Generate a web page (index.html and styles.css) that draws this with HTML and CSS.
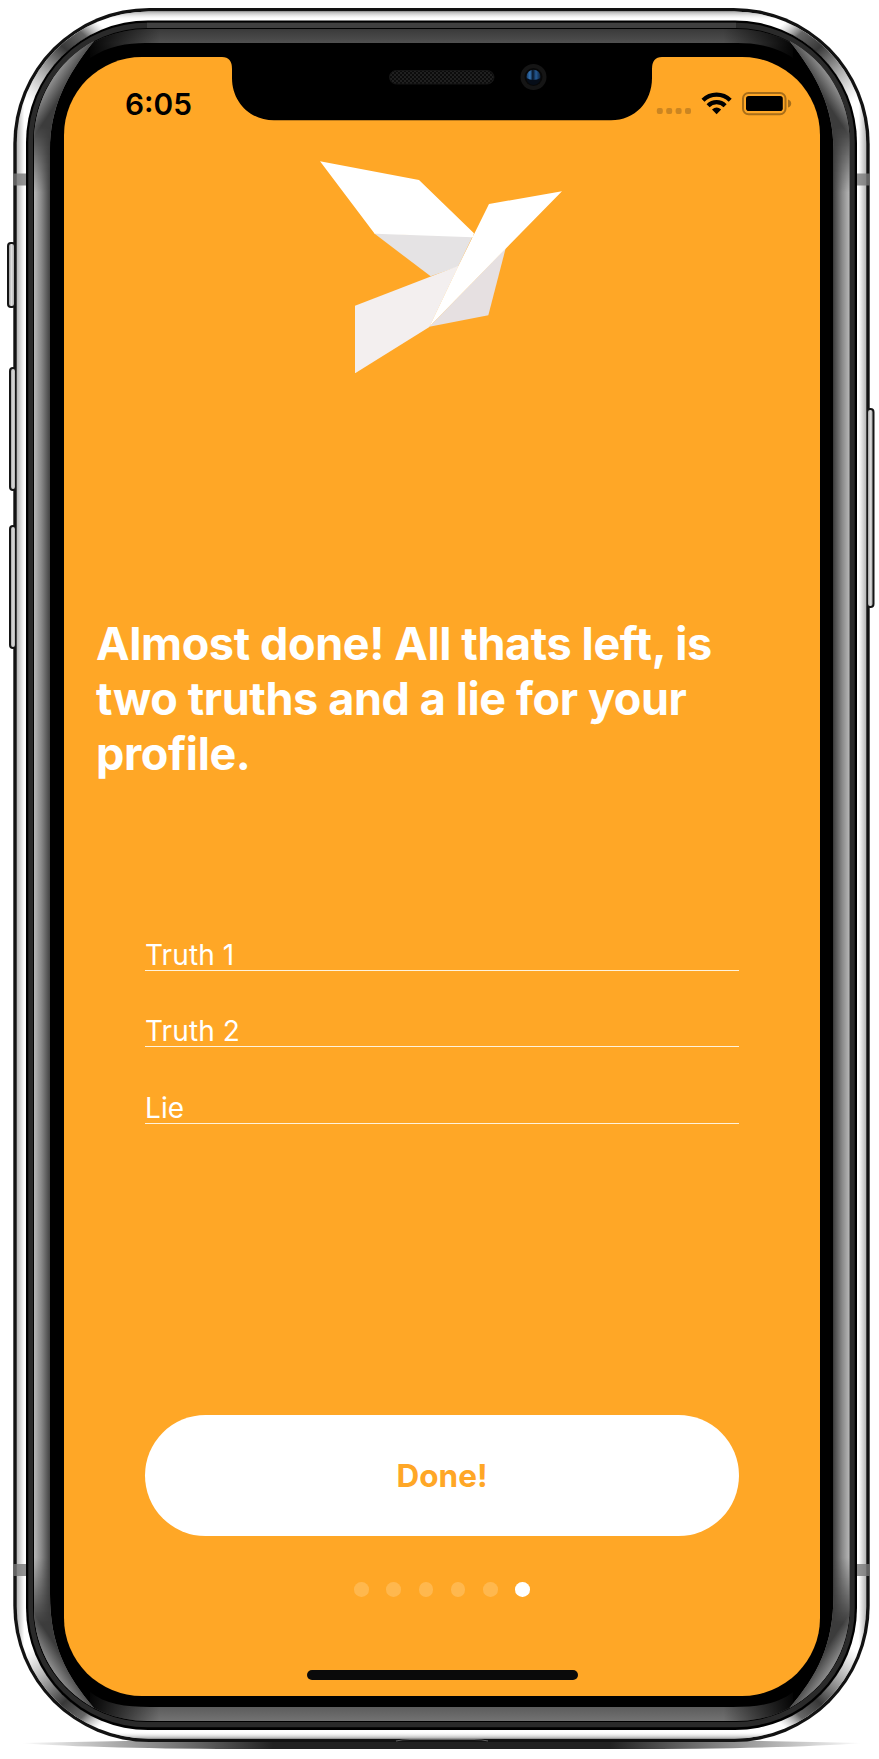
FILE: index.html
```
<!DOCTYPE html>
<html lang="en">
<head>
<meta charset="utf-8">
<title>Profile setup</title>
<link rel="stylesheet" href="styles.css">
</head>
<body>
<div class="device">
  <svg class="frame" viewBox="0 0 879 1759" aria-hidden="true">
    <defs>
      <linearGradient id="steel" x1="0" x2="1"><stop offset="0" stop-color="#b4b4b4"/><stop offset=".009" stop-color="#fff"/><stop offset=".991" stop-color="#fff"/><stop offset="1" stop-color="#b4b4b4"/></linearGradient>
      <linearGradient id="steelV" x1="0" x2="0" y1="0" y2="1"><stop offset="0" stop-color="#aaa"/><stop offset=".005" stop-color="#fff" stop-opacity="0"/><stop offset=".996" stop-color="#fff" stop-opacity="0"/><stop offset="1" stop-color="#aaa"/></linearGradient>
      <linearGradient id="side" gradientUnits="userSpaceOnUse" x1="34" x2="50" y1="0" y2="0"><stop offset="0" stop-color="#b8b8b8"/><stop offset=".45" stop-color="#8a8a8a"/><stop offset="1" stop-color="#424242"/></linearGradient>
      <linearGradient id="tipTop" gradientUnits="userSpaceOnUse" x1="46" y1="80" x2="64" y2="92"><stop offset="0" stop-color="#a8a8a8"/><stop offset="1" stop-color="#3c3c3c"/></linearGradient>
      <linearGradient id="tipBottom" gradientUnits="userSpaceOnUse" x1="46" y1="1670" x2="64" y2="1658"><stop offset="0" stop-color="#a8a8a8"/><stop offset="1" stop-color="#3c3c3c"/></linearGradient>
      <linearGradient id="blend" x1="0" x2="0" y1="0" y2="1"><stop offset="0" stop-color="#fff" stop-opacity="0"/><stop offset=".045" stop-color="#fff"/><stop offset=".955" stop-color="#fff"/><stop offset="1" stop-color="#fff" stop-opacity="0"/></linearGradient>
      <mask id="straight"><rect x="30" y="125" width="30" height="1500" fill="url(#blend)"/></mask>
      <linearGradient id="fade" x1="0" x2="1"><stop offset="0" stop-color="#000" stop-opacity=".95"/><stop offset=".1" stop-color="#000" stop-opacity="0"/><stop offset=".9" stop-color="#000" stop-opacity="0"/><stop offset="1" stop-color="#000" stop-opacity=".95"/></linearGradient>
      <linearGradient id="top" x1="0" x2="0" y1="0" y2="1"><stop offset="0" stop-color="#383838"/><stop offset=".5" stop-color="#505050"/><stop offset="1" stop-color="#3c3c3c"/></linearGradient>
      <linearGradient id="bottom" x1="0" x2="0" y1="0" y2="1"><stop offset="0" stop-color="#444"/><stop offset="1" stop-color="#747474"/></linearGradient>
      <linearGradient id="shade" x1="0" x2="1"><stop offset="0" stop-color="#222" stop-opacity="0"/><stop offset=".3" stop-color="#222"/><stop offset=".7" stop-color="#222"/><stop offset="1" stop-color="#222" stop-opacity="0"/></linearGradient>
      <linearGradient id="key" x1="0" x2="1"><stop offset="0" stop-color="#888"/><stop offset=".5" stop-color="#dedede"/><stop offset="1" stop-color="#999"/></linearGradient>
      <linearGradient id="glint" gradientUnits="userSpaceOnUse" x1="28" y1="100" x2="98" y2="22"><stop offset="0" stop-color="#aaa" stop-opacity="0"/><stop offset=".4" stop-color="#888"/><stop offset=".6" stop-color="#383838"/><stop offset=".82" stop-color="#666"/><stop offset="1" stop-color="#aaa" stop-opacity="0"/></linearGradient>
      <linearGradient id="lens" x1="0" x2="1"><stop offset="0" stop-color="#173a63"/><stop offset=".25" stop-color="#3474b5"/><stop offset=".45" stop-color="#081425"/><stop offset=".68" stop-color="#245a96"/><stop offset="1" stop-color="#0d2038"/></linearGradient>
      <pattern id="mesh" width="4" height="4" patternUnits="userSpaceOnUse"><rect width="4" height="4" fill="#0c0c0c"/><rect width="2" height="2" fill="#202020"/><rect x="2" y="2" width="2" height="2" fill="#202020"/></pattern>
      <clipPath id="glass"><rect x="34" y="29" width="815.500" height="1692" rx="113"/></clipPath>
      <g id="sideBevel">
        <path d="M94 41A114 114 0 0 0 34 142V1608A114 114 0 0 0 94 1708C66 1675 50 1645 50 1594V150C50 108 66 76 94 41Z" fill="#777"/>
        <path d="M94 41A114 114 0 0 0 34 142V200H50V150C50 108 66 76 94 41Z" fill="url(#tipTop)"/>
        <path d="M94 1708A114 114 0 0 1 34 1608V1550H50V1594C50 1645 66 1675 94 1708Z" fill="url(#tipBottom)"/>
        <rect x="34" y="125" width="16" height="1500" fill="url(#side)" mask="url(#straight)"/>
      </g>
    </defs>
    <path d="M20 1743Q440 1733 863 1743Q780 1749 620 1749H260Q100 1749 20 1743Z" fill="url(#shade)"/>
    <rect x="13.3" y="8" width="856.4" height="1734" rx="136" fill="#121212"/>
    <g fill="url(#key)" stroke="#151515" stroke-width="2">
      <rect x="8" y="243" width="7" height="64" rx="3"/>
      <rect x="10" y="368" width="6" height="122" rx="3"/>
      <rect x="10" y="526" width="6" height="122" rx="3"/>
      <rect x="867" y="409" width="6.500" height="198" rx="3"/>
    </g>
    <rect x="16.7" y="11.5" width="849.6" height="1727" rx="132" fill="url(#steel)"/>
    <rect x="16.7" y="11.5" width="849.6" height="1727" rx="132" fill="url(#steelV)"/>
    <g fill="none" stroke="url(#glint)" stroke-width="9">
      <path id="corner" d="M21.5 143A127 127 0 0 1 148 16"/>
      <use href="#corner" transform="translate(883) scale(-1 1)"/>
      <use href="#corner" transform="translate(0 1750) scale(1 -1)"/>
      <use href="#corner" transform="translate(883 1750) scale(-1 -1)"/>
    </g>
    <path d="M13.3 173.5H27V185.5H13.3ZM856 173.5H869.7V185.5H856ZM13.3 1564H27V1576H13.3ZM856 1564H869.7V1576H856Z" fill="#777" fill-opacity=".8"/>
    <rect x="26" y="20.5" width="831" height="1709.5" rx="122" fill="#000"/>
    <rect x="28.3" y="22.8" width="826.4" height="1704.4" rx="119" fill="#2a2a2a"/>
    <path d="M147 22.8H736V28H147Z" fill="#404040"/>
    <rect x="33" y="28" width="817" height="1694" rx="114" fill="#000"/>
    <g clip-path="url(#glass)">
      <path d="M90 28H793V58C775 46 755 43 738 43H145C128 43 108 46 90 58Z" fill="url(#top)"/>
      <path d="M90 1692C105 1704 125 1707 150 1707H733C758 1707 778 1704 793 1692V1722H90Z" fill="url(#bottom)"/>
      <path d="M89 28H794V59H89ZM89 1690H794V1722H89Z" fill="url(#fade)"/>
    </g>
    <use href="#sideBevel"/>
    <use href="#sideBevel" transform="translate(883.5) scale(-1 1)"/>
    <path d="M396 1741Q402 1739.5 410 1739.5H474Q482 1739.5 488 1741" fill="none" stroke="#666" stroke-width="1.2"/>
  </svg>

  <main class="screen">
    <svg class="notch" viewBox="222 57 440 64" aria-hidden="true">
      <path d="M222 57Q232 57 232 69V78C232 102 250 120.3 274 120.3H611C635 120.3 652 102 652 78V69Q652 57 662 57Z" fill="#000"/>
      <rect x="389.5" y="70.5" width="104.500" height="13.500" rx="6.750" fill="url(#mesh)" stroke="#151515"/>
      <circle cx="533.5" cy="77" r="13" fill="#151515"/><circle cx="533.5" cy="77" r="9" fill="#080808"/>
      <circle cx="533.5" cy="76.700" r="7" fill="url(#lens)"/>
      <path d="M526.500 78A7 7 0 0 0 540.500 78Q533.500 82 526.500 78Z" fill="#060d18"/>
    </svg>

    <header class="status">
      <span class="time">6:05</span>
      <svg class="indicators" viewBox="656 91 136 26" aria-hidden="true">
        <g fill="#cb8521"><rect x="656.800" y="108" width="6" height="6" rx="2"/><rect x="666.200" y="108" width="6" height="6" rx="2"/><rect x="675.600" y="108" width="6" height="6" rx="2"/><rect x="685" y="108" width="6" height="6" rx="2"/></g>
        <g fill="none" stroke="#000" stroke-width="4.300"><path d="M703 100.300A19.300 19.300 0 0 1 730.200 100.300"/><path d="M708.100 105.700A12 12 0 0 1 725.100 105.700"/></g>
        <path d="M712 109.600Q716.600 105.500 721.200 109.600L716.600 114.200Z"/>
        <rect x="743" y="93" width="42.500" height="21.200" rx="5.500" fill="none" stroke="#a86e19" stroke-width="2"/>
        <rect x="746" y="96" width="36.800" height="15" rx="2.800"/>
        <path d="M788 99.500Q791.200 100.500 791.200 103.500T788 107.500Z" fill="#a86e19"/>
      </svg>
    </header>

    <svg class="bird" viewBox="60 62 726 637" role="img" aria-label="Origami bird">
      <path d="M222 279L518 288L474 379L392 408Z" fill="#e5e3e4"/>
      <path d="M165 496L476 376L388 560L165 699Z" fill="#f3efef"/>
      <path d="M617 324L565 525L388 559Z" fill="#e6e0e1"/>
      <path d="M60 63L357 119L522 279L518 291L224 280ZM567 191L786 153L617 325L388 559L475 377L518 290Z" fill="#fff"/>
    </svg>

    <h1 class="title">Almost done! All thats left, is<br>two truths and a lie for your<br>profile.</h1>

    <div class="fields">
      <div class="field">Truth 1</div>
      <div class="field">Truth 2</div>
      <div class="field">Lie</div>
    </div>

    <button class="done">Done!</button>

    <div class="pages">
      <i></i><i></i><i></i><i></i><i></i><i class="active"></i>
    </div>
    <div class="home"></div>
  </main>
</div>
</body>
</html>
```
FILE: styles.css
```
* { box-sizing: border-box; }
body { margin: 0; background: #fff; font-family: Inter, "Liberation Sans", sans-serif; }
.device { position: relative; width: 879px; height: 1759px; padding: 57px 59px 63px 64px; overflow: hidden; }
.frame { position: absolute; inset: 0; width: 879px; height: 1759px; }
.screen {
  position: relative;
  display: flex;
  flex-direction: column;
  width: 756px;
  height: 1639px;
  border-radius: 78px;
  background: #ffa726;
  overflow: hidden;
  color: #fff;
}
.notch { position: absolute; left: 158px; top: 0; width: 440px; height: 64px; }
.status { flex: none; display: flex; justify-content: space-between; height: 104px; padding: 28px 28px 0 61px; color: #000; }
.time { margin-top: 1px; font-size: 29.800px; line-height: 36px; font-weight: 600; }
.indicators { width: 136px; height: 26px; margin-top: 6px; }
.bird { width: 242px; height: 212.300px; margin-left: 256px; flex: none; }
.title { margin: 243px 0 0 32px; font-size: 45px; line-height: 55px; font-weight: 700; letter-spacing: -.4px; white-space: nowrap; }
.fields { display: flex; flex-direction: column; margin: 113px 81px 0; }
.field { height: 76.600px; padding: 45.500px 0 0; border-bottom: 1.500px solid #fff3dc; font-size: 28px; line-height: 30px; letter-spacing: .1px; }
.done { flex: none; width: 594px; height: 121px; margin: 291px 0 0 81px; border: 0; border-radius: 61px; background: #fff; color: #ffa726; font: 700 31.500px Inter, "Liberation Sans", sans-serif; }
.pages { display: flex; gap: 17.700px; margin: 46px 0 0 290px; }
.pages i { width: 14.600px; height: 14.600px; border-radius: 50%; background: #ffb84e; }
.pages .active { background: #fff; }
.home { width: 270.500px; height: 10.300px; margin: 73px 0 0 243px; border-radius: 6px; background: #0a0a0a; }
```
